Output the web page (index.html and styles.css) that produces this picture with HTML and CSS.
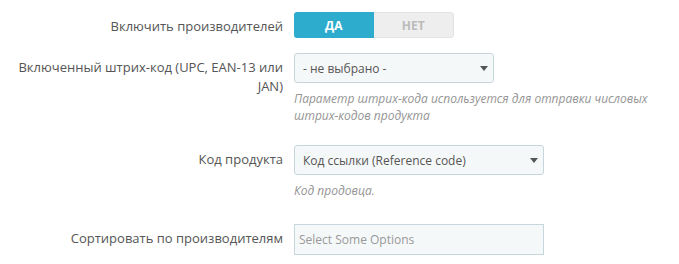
FILE: index.html
```html
<!DOCTYPE html>
<html lang="en">
<head>
    <meta charset="UTF-8">
    <meta name="viewport" content="width=device-width, initial-scale=1.0">
    <title>Настройки продуктов</title>
    <link rel="stylesheet" href="styles.css">
</head>
<body>

<form class="settings">
    <div class="form-group">
        <label class="control-label">Включить производителей</label>
        <div class="control">
            <span class="switch">
                <span class="switch-on">Да</span>
                <span class="switch-off">Нет</span>
            </span>
        </div>
    </div>

    <div class="form-group">
        <label class="control-label">Включенный штрих-код (UPC, EAN-13 или JAN)</label>
        <div class="control">
            <div class="select select-sm">
                <span>- не выбрано -</span>
                <span class="caret"></span>
            </div>
            <p class="help-block">Параметр штрих-кода используется для отправки числовых штрих-кодов продукта</p>
        </div>
    </div>

    <div class="form-group group-ref">
        <label class="control-label">Код продукта</label>
        <div class="control">
            <div class="select">
                <span>Код ссылки (Reference code)</span>
                <span class="caret"></span>
            </div>
            <p class="help-block">Код продовца.</p>
        </div>
    </div>

    <div class="form-group group-sort">
        <label class="control-label">Сортировать по производителям</label>
        <div class="control">
            <input type="text" class="chosen" placeholder="Select Some Options">
        </div>
    </div>
</form>

</body>
</html>
```

FILE: styles.css
```css
body {
    margin: 0;
    font-family: "Open Sans", Arial, sans-serif;
    font-size: 13px;
    color: #555;
    background: #fff;
}
.settings {
    padding-top: 12px;
}
.form-group {
    display: flex;
    margin-bottom: 15px;
}
.group-ref {
    margin-top: 21px;
    margin-bottom: 25px;
}
.control-label {
    width: 268px;
    padding-left: 15px;
    padding-top: 5px;
    text-align: right;
    line-height: 19px;
    box-sizing: content-box;
}
.control {
    margin-left: 11px;
}
.switch {
    display: flex;
    width: 160px;
    height: 26px;
    border-radius: 3px;
    overflow: hidden;
    font-size: 12px;
    font-weight: bold;
    text-transform: uppercase;
}
.switch-on, .switch-off {
    flex: 1;
    display: flex;
    align-items: center;
    justify-content: center;
}
.switch-on {
    background-color: #2eacce;
    color: #fff;
}
.switch-off {
    background-color: #eee;
    color: #bbb;
    border: 1px solid #e2e2e2;
    border-left: none;
    border-radius: 0 3px 3px 0;
}
.select {
    display: flex;
    align-items: center;
    justify-content: space-between;
    width: 250px;
    height: 30px;
    padding: 0 5px 0 8px;
    box-sizing: border-box;
    background-color: #f5f8f9;
    border: 1px solid #c7d6db;
    border-radius: 3px;
    font-size: 12px;
    color: #555;
}
.select-sm {
    width: 200px;
}
.caret {
    width: 0;
    height: 0;
    border-left: 4.5px solid transparent;
    border-right: 4.5px solid transparent;
    border-top: 5px solid #555;
}
.help-block {
    margin: 7px 0 0;
    width: 370px;
    font-size: 12px;
    font-style: italic;
    line-height: 17px;
    color: #959595;
}
.chosen {
    width: 250px;
    height: 31px;
    padding: 0 4px;
    box-sizing: border-box;
    background-color: #f5f8f9;
    border: 1px solid #c7d6db;
    border-radius: 0;
    font-family: "Open Sans", Arial, sans-serif;
    font-size: 12px;
    color: #555;
}
.chosen::placeholder {
    color: #999;
}
```
